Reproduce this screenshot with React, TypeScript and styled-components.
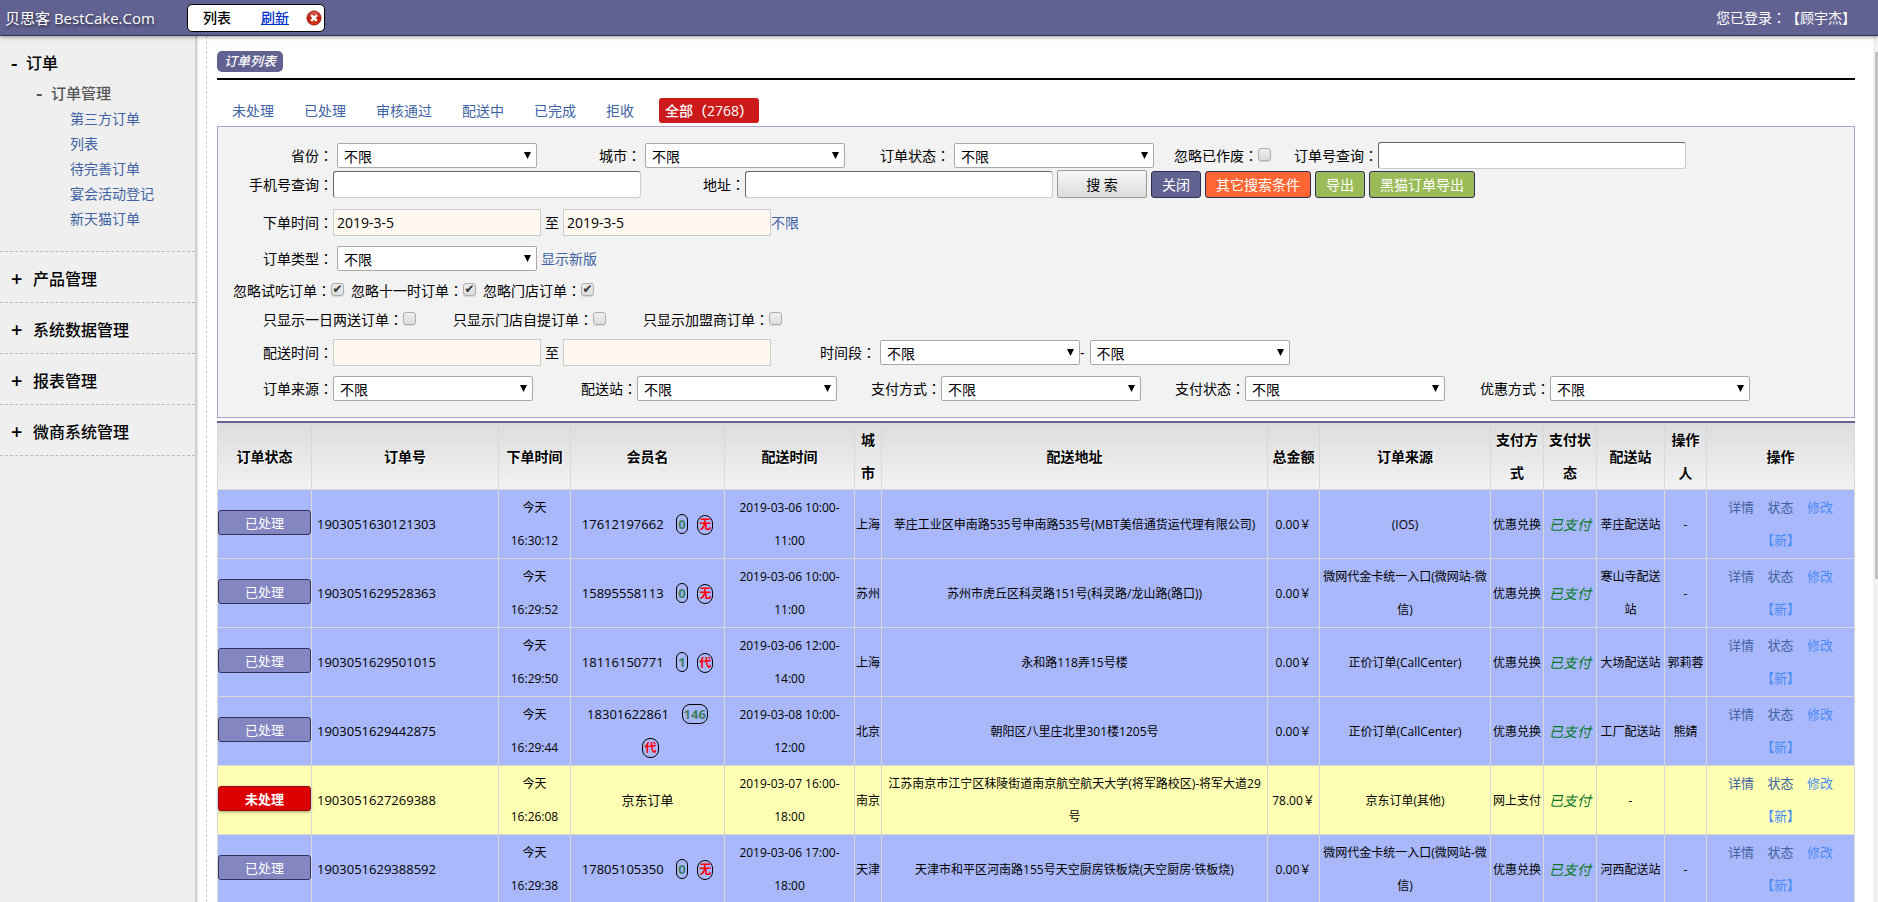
import React from 'react';
import styled, { createGlobalStyle, css } from 'styled-components';

const Global = createGlobalStyle`
  * { box-sizing: border-box; }
  body {
    margin: 0;
    background: #fff;
    color: #000;
    font-family: "Open Sans", "Noto Sans CJK SC", sans-serif;
    font-size: 14px;
    line-height: 20px;
    text-spacing-trim: space-all;
  }
  button, input, select { font-family: inherit; font-size: 14px; color: inherit; }
  a { color: #4163a3; text-decoration: none; }
`;

const Shell = styled.div`
  display: flex;
  flex-direction: column;
  height: 100vh;
  overflow: hidden;
`;

/* Full-width colon centred in its square, as in the traditional form. */
const ColonMark = styled.span`
  font-family: "Noto Sans CJK TC", sans-serif;
`;

/* ---------- top bar ---------- */

const TopBar = styled.header`
  position: relative;
  z-index: 1;
  display: flex;
  flex: none;
  align-items: center;
  height: 36px;
  padding: 0 22px 0 5px;
  background: #626292;
  border-bottom: 1px solid #33334a;
  box-shadow: 0 1px 4px rgba(0, 0, 0, 0.4);
  color: #fff;
`;

const Brand = styled.h1`
  width: 182px;
  margin: 0;
  font-size: 15px;
  font-weight: 400;
  text-shadow: 1px 2px 3px rgba(0, 0, 0, 0.6);
  white-space: nowrap;
`;

const OpenTab = styled.div`
  display: flex;
  align-items: center;
  height: 28px;
  padding: 0 2px 0 15px;
  background: #fff;
  border: 1px solid #000;
  border-radius: 5px;
  color: #000;
  font-weight: 500;
`;

const RefreshLink = styled.a`
  margin: 0 17px 0 30px;
  color: #0033cc;
  text-decoration: underline;
`;

const CloseButton = styled.button`
  display: flex;
  padding: 0;
  background: none;
  border: 0;
  cursor: pointer;
`;

const Login = styled.div`
  margin-left: auto;
`;

/* ---------- side menu ---------- */

const Body = styled.div`
  display: flex;
  flex: 1;
  min-height: 0;
`;

const SideBar = styled.nav`
  flex: none;
  width: 197px;
  background: #efefef;
  border-right: 2px solid #cfcfcf;
  box-shadow: 1px 0 2px rgba(0, 0, 0, 0.12);
`;

const OpenGroup = styled.section`
  height: 216px;
  padding-top: 15px;
  border-bottom: 1px dashed #bbb;
`;

const GroupTitle = styled.h2`
  display: flex;
  margin: 0;
  padding-left: 11px;
  font-size: 16px;
  font-weight: 500;
  line-height: 24px;
`;

const SubTitle = styled.h3`
  display: flex;
  margin: 6px 0 0;
  padding-left: 36px;
  color: #555;
  font-size: 15px;
  font-weight: 500;
  line-height: 24px;
`;

const Sign = styled.span<{ $wide?: boolean }>`
  width: ${(p) => (p.$wide ? 22 : 15)}px;
  font-size: 20px;
  font-weight: 600;
`;

const MenuList = styled.ul`
  margin: 1px 0 0;
  padding: 0 0 0 70px;
  list-style: none;
  line-height: 25px;
`;

const ClosedGroup = styled.section`
  display: flex;
  align-items: center;
  height: 51px;
  padding-top: 4px;
  border-bottom: 1px dashed #bbb;
`;

/* ---------- main column ---------- */

const Main = styled.main`
  flex: 1;
  min-width: 0;
  margin-left: 9px;
  padding: 15px 18px 0 10px;
  border-left: 1px dashed #ccc;
`;

const PageHead = styled.div`
  height: 29px;
  border-bottom: 2px solid #000;
`;

const PageTitle = styled.h2`
  display: inline-block;
  margin: 0;
  padding: 0 7px;
  background: #626292;
  border-radius: 5px;
  color: #fff;
  font-size: 13px;
  font-style: italic;
  font-weight: 500;
  line-height: 21px;
`;

const StatusTabs = styled.nav`
  display: flex;
  align-items: center;
  gap: 30px;
  height: 46px;
  padding: 15px 0 0 15px;
`;

const ActiveTab = styled.a`
  margin-left: -5px;
  padding: 0 6px;
  background: #cc1a1a;
  border-radius: 3px;
  color: #fff;
  font-weight: 500;
  line-height: 25px;
`;

const SearchPanel = styled.form`
  padding: 15px 0 16px;
  background: #f2f2f2;
  border: 1px solid #a5a5cc;
`;

const Row = styled.div<{ $h?: number; $top?: number; $indent?: number }>`
  display: flex;
  align-items: center;
  height: ${(p) => p.$h ?? 27}px;
  margin-top: ${(p) => p.$top ?? 10}px;
  padding-left: ${(p) => p.$indent ?? 45}px;
  white-space: nowrap;
`;

const Field = styled.label<{ $before?: number; $gap?: number }>`
  display: flex;
  align-items: center;
  gap: ${(p) => p.$gap ?? 0}px;
  margin-left: ${(p) => p.$before ?? 0}px;
`;

const TextBox = styled.input`
  width: 308px;
  height: 27px;
  padding: 0 4px;
  background: #fff;
  border: 1px solid;
  border-color: #666 #ccc #ccc #666;
  border-radius: 3px;
`;

const DateBox = styled.input`
  width: 208px;
  height: 27px;
  padding: 0 3px;
  background: #fff8f0;
  border: 1px solid #ccc;
`;

const Between = styled.span`
  padding: 0 4px;
`;

const SelectWrap = styled.span`
  position: relative;
  display: flex;
`;

const SelectBox = styled.select`
  appearance: none;
  width: 200px;
  height: 25px;
  padding: 1px 20px 0 6px;
  background: #fff;
  border: 1px solid #a9a9a9;
  border-radius: 2px;
`;

const Arrow = styled.svg`
  position: absolute;
  top: 9px;
  right: 6px;
  pointer-events: none;
`;

const Tick = styled.input`
  appearance: none;
  display: flex;
  align-items: center;
  justify-content: center;
  width: 13px;
  height: 13px;
  margin: 0 0 3px;
  background: linear-gradient(#eee, #dcdcdc);
  border: 1px solid #adadad;
  border-radius: 3px;
  box-shadow: 0 1px 1px rgba(0, 0, 0, 0.12);
  &:checked::after {
    content: '✔';
    color: #333;
    font: 12px/12px "DejaVu Sans", sans-serif;
  }
`;

const SearchButton = styled.button`
  width: 90px;
  height: 28px;
  margin-left: 4px;
  background: linear-gradient(#f6f6f6, #dcdcdc);
  border: 1px solid #999;
  border-radius: 2px;
`;

const ActionButton = styled.button<{ $bg: string }>`
  height: 27px;
  margin-left: 4px;
  padding: 0 10px;
  background: ${(p) => p.$bg};
  border: 1px solid #2e2e55;
  border-radius: 3px;
  color: #fff;
`;

/* ---------- orders table ---------- */

const Orders = styled.table`
  width: 100%;
  margin-top: 3px;
  border-collapse: collapse;
  border-top: 2px solid #626292;
  table-layout: fixed;
  font-size: 12px;
  line-height: 33px;
  text-align: center;
`;

const HeadRow = styled.tr`
  background: linear-gradient(#dcdcdc, #f2f2f2);
`;

const HeadCell = styled.th`
  height: 67px;
  padding: 0 3px;
  border: 1px solid #d8d8d8;
  border-top: 0;
  font-size: 14px;
  text-shadow: 1px 1px 2px #fff;
`;

const OrderRow = styled.tr<{ $pending?: boolean }>`
  background: ${(p) => (p.$pending ? '#ffffb3' : '#a9b8fb')};
`;

type CellKind = 'number' | 'when' | 'member' | 'address' | 'paid' | 'ops' | 'status';

const Cell = styled.td<{ $kind?: CellKind }>`
  height: 69px;
  padding: 1px 0;
  border: 1px solid #d8d8d8;
  ${(p) => p.$kind === 'number' && css`padding-left: 5px; font-size: 13px; text-align: left;`}
  ${(p) => p.$kind === 'when' && css`padding: 1px 6px;`}
  ${(p) => p.$kind === 'member' && css`padding: 1px 6px; font-size: 13px;`}
  ${(p) => p.$kind === 'address' && css`padding: 1px 4px;`}
  ${(p) => p.$kind === 'paid' && css`color: #0a7a2a; font-size: 14px; font-style: italic;`}
  ${(p) => p.$kind === 'ops' && css`padding: 1px 15px; font-size: 13px;`}
`;

const StateButton = styled.button<{ $pending?: boolean }>`
  display: block;
  width: 100%;
  height: 25px;
  margin-bottom: 3px;
  padding: 0;
  background: ${(p) => (p.$pending ? '#dd0000' : '#8486c1')};
  border: 1px solid ${(p) => (p.$pending ? '#8e1010' : '#333360')};
  border-radius: 3px;
  box-shadow: ${(p) => (p.$pending ? '0 1px 3px rgba(0, 0, 0, 0.4)' : 'none')};
  color: #fff;
  font-size: 13px;
  font-weight: ${(p) => (p.$pending ? 700 : 400)};
`;

const Pill = styled.b<{ $red?: boolean }>`
  display: inline-block;
  margin-left: 6px;
  padding: 0 1px;
  border: 1px solid #000;
  border-radius: 8px;
  color: ${(p) => (p.$red ? '#ff0000' : '#3f7f60')};
  font-size: ${(p) => (p.$red ? 12 : 13)}px;
  line-height: 18px;
`;

const OpLink = styled.a<{ $bright?: boolean }>`
  margin: 0 5px;
  color: ${(p) => (p.$bright ? '#4a8cf7' : '#4163a3')};
`;

/* ---------- page scroll bar ---------- */

const ScrollTrack = styled.div`
  flex: none;
  width: 5px;
  padding: 16px 0 0 2px;
  background: #f1f1f1;
`;

const ScrollThumb = styled.div`
  height: 62%;
  background: #c1c1c1;
`;

/* ---------- data ---------- */

const menuLinks = ['第三方订单', '列表', '待完善订单', '宴会活动登记', '新天猫订单'];
const closedGroups = ['产品管理', '系统数据管理', '报表管理', '微商系统管理'];
const statusTabs = ['未处理', '已处理', '审核通过', '配送中', '已完成', '拒收'];

const columns: [string, number | undefined][] = [
  ['订单状态', 94],
  ['订单号', 187],
  ['下单时间', 72],
  ['会员名', 154],
  ['配送时间', 130],
  ['城市', 27],
  ['配送地址', undefined],
  ['总金额', 52],
  ['订单来源', 171],
  ['支付方式', 53],
  ['支付状态', 53],
  ['配送站', 68],
  ['操作人', 42],
  ['操作', 148],
];

interface Order {
  no: string;
  time: string;
  member: string;
  count?: string;
  tag?: string;
  date: string;
  until: string;
  city: string;
  address: string;
  amount: string;
  source: string;
  pay: string;
  station: string;
  operator: string;
  pending?: boolean;
}

const orders: Order[] = [
  { no: '1903051630121303', time: '16:30:12', member: '17612197662', count: '0', tag: '无', date: '2019-03-06 10:00-', until: '11:00', city: '上海', address: '莘庄工业区申南路535号申南路535号(MBT美倍通货运代理有限公司)', amount: '0.00', source: '(IOS)', pay: '优惠兑换', station: '莘庄配送站', operator: '-' },
  { no: '1903051629528363', time: '16:29:52', member: '15895558113', count: '0', tag: '无', date: '2019-03-06 10:00-', until: '11:00', city: '苏州', address: '苏州市虎丘区科灵路151号(科灵路/龙山路(路口))', amount: '0.00', source: '微网代金卡统一入口(微网站-微信)', pay: '优惠兑换', station: '寒山寺配送站', operator: '-' },
  { no: '1903051629501015', time: '16:29:50', member: '18116150771', count: '1', tag: '代', date: '2019-03-06 12:00-', until: '14:00', city: '上海', address: '永和路118弄15号楼', amount: '0.00', source: '正价订单(CallCenter)', pay: '优惠兑换', station: '大场配送站', operator: '郭莉蓉' },
  { no: '1903051629442875', time: '16:29:44', member: '18301622861', count: '146', tag: '代', date: '2019-03-08 10:00-', until: '12:00', city: '北京', address: '朝阳区八里庄北里301楼1205号', amount: '0.00', source: '正价订单(CallCenter)', pay: '优惠兑换', station: '工厂配送站', operator: '熊婧' },
  { no: '1903051627269388', time: '16:26:08', member: '京东订单', date: '2019-03-07 16:00-', until: '18:00', city: '南京', address: '江苏南京市江宁区秣陵街道南京航空航天大学(将军路校区)-将军大道29号', amount: '78.00', source: '京东订单(其他)', pay: '网上支付', station: '-', operator: '', pending: true },
  { no: '1903051629388592', time: '16:29:38', member: '17805105350', count: '0', tag: '无', date: '2019-03-06 17:00-', until: '18:00', city: '天津', address: '天津市和平区河南路155号天空厨房铁板烧(天空厨房·铁板烧)', amount: '0.00', source: '微网代金卡统一入口(微网站-微信)', pay: '优惠兑换', station: '河西配送站', operator: '-' },
];

/* ---------- parts ---------- */

function Colon() {
  return <ColonMark lang="zh-TW">：</ColonMark>;
}

function Labelled({ text, before, gap, children }: { text: string; before?: number; gap?: number; children: React.ReactNode }) {
  return (
    <Field $before={before} $gap={gap}>
      <span>{text}<Colon /></span>
      {children}
    </Field>
  );
}

function Dropdown({ label }: { label?: string }) {
  return (
    <SelectWrap>
      <SelectBox aria-label={label}>
        <option>不限</option>
      </SelectBox>
      <Arrow width="7" height="7" viewBox="0 0 7 7" aria-hidden="true">
        <path d="M0 0h7L3.5 7z" fill="#000" />
      </Arrow>
    </SelectWrap>
  );
}

function TickField({ label, before, checked }: { label: string; before?: number; checked?: boolean }) {
  return (
    <Labelled text={label} before={before}>
      <Tick type="checkbox" defaultChecked={checked} />
    </Labelled>
  );
}

function CloseIcon() {
  return (
    <svg width="16" height="16" viewBox="0 0 16 16" aria-hidden="true">
      <defs>
        <linearGradient id="closeFill" x1="0" y1="0" x2="0" y2="1">
          <stop offset="0" stopColor="#d9685a" />
          <stop offset="0.5" stopColor="#bf1d0c" />
          <stop offset="1" stopColor="#e03a1c" />
        </linearGradient>
      </defs>
      <circle cx="8" cy="8" r="7" fill="url(#closeFill)" stroke="#a01408" />
      <path d="M5.2 5.2l5.6 5.6M10.8 5.2l-5.6 5.6" stroke="#fff" strokeWidth="2.4" />
    </svg>
  );
}

function SearchForm() {
  return (
    <SearchPanel onSubmit={(e) => e.preventDefault()}>
      <Row $top={0} $indent={73}>
        <Labelled text="省份" gap={4}><Dropdown /></Labelled>
        <Labelled text="城市" gap={4} before={62}><Dropdown /></Labelled>
        <Labelled text="订单状态" gap={4} before={35}><Dropdown /></Labelled>
        <TickField label="忽略已作废" before={20} />
        <Labelled text="订单号查询" before={23}><TextBox type="text" /></Labelled>
      </Row>
      <Row $top={0} $h={30} $indent={31}>
        <Labelled text="手机号查询"><TextBox type="text" /></Labelled>
        <Labelled text="地址" before={62}><TextBox type="text" /></Labelled>
        <SearchButton type="submit">搜 索</SearchButton>
        <ActionButton type="button" $bg="#626292">关闭</ActionButton>
        <ActionButton type="button" $bg="#ff6633">其它搜索条件</ActionButton>
        <ActionButton type="button" $bg="#9bbb59">导出</ActionButton>
        <ActionButton type="button" $bg="#9bbb59">黑猫订单导出</ActionButton>
      </Row>
      <Row>
        <Labelled text="下单时间"><DateBox type="text" defaultValue="2019-3-5" /></Labelled>
        <Between>至</Between>
        <DateBox type="text" aria-label="下单时间至" defaultValue="2019-3-5" />
        <a href="#any">不限</a>
      </Row>
      <Row $h={25}>
        <Labelled text="订单类型" gap={4}><Dropdown /></Labelled>
        <Between><a href="#new">显示新版</a></Between>
      </Row>
      <Row $h={19} $indent={15}>
        <TickField label="忽略试吃订单" checked />
        <TickField label="忽略十一时订单" before={7} checked />
        <TickField label="忽略门店订单" before={7} checked />
      </Row>
      <Row $h={19}>
        <TickField label="只显示一日两送订单" />
        <TickField label="只显示门店自提订单" before={37} />
        <TickField label="只显示加盟商订单" before={37} />
      </Row>
      <Row>
        <Labelled text="配送时间"><DateBox type="text" /></Labelled>
        <Between>至</Between>
        <DateBox type="text" aria-label="配送时间至" />
        <Labelled text="时间段" gap={4} before={49}><Dropdown /></Labelled>
        <Field $gap={5}>-<Dropdown label="时间段至" /></Field>
      </Row>
      <Row $h={25}>
        <Labelled text="订单来源"><Dropdown /></Labelled>
        <Labelled text="配送站" before={48}><Dropdown /></Labelled>
        <Labelled text="支付方式" before={34}><Dropdown /></Labelled>
        <Labelled text="支付状态" before={34}><Dropdown /></Labelled>
        <Labelled text="优惠方式" before={35}><Dropdown /></Labelled>
      </Row>
    </SearchPanel>
  );
}

function OrdersTable() {
  return (
    <Orders>
      <colgroup>
        {columns.map(([name, width]) => <col key={name} width={width} />)}
      </colgroup>
      <thead>
        <HeadRow>
          {columns.map(([name]) => <HeadCell key={name} scope="col">{name}</HeadCell>)}
        </HeadRow>
      </thead>
      <tbody>
        {orders.map((o) => (
          <OrderRow key={o.no} $pending={o.pending}>
            <Cell $kind="status">
              <StateButton type="button" $pending={o.pending}>{o.pending ? '未处理' : '已处理'}</StateButton>
            </Cell>
            <Cell $kind="number">{o.no}</Cell>
            <Cell $kind="when">今天 {o.time}</Cell>
            <Cell $kind="member">
              {o.member}
              {o.count && <>&nbsp; <Pill>{o.count}</Pill></>}
              {o.tag && <> <Pill $red>{o.tag}</Pill></>}
            </Cell>
            <Cell>{o.date}<br />{o.until}</Cell>
            <Cell>{o.city}</Cell>
            <Cell $kind="address">{o.address}</Cell>
            <Cell>{o.amount}￥</Cell>
            <Cell>{o.source}</Cell>
            <Cell>{o.pay}</Cell>
            <Cell $kind="paid">已支付</Cell>
            <Cell>{o.station}</Cell>
            <Cell>{o.operator}</Cell>
            <Cell $kind="ops">
              <OpLink href="#detail">详情</OpLink> <OpLink href="#state">状态</OpLink>{' '}
              <OpLink href="#edit" $bright>修改</OpLink> <OpLink href="#new" $bright>【新】</OpLink>
            </Cell>
          </OrderRow>
        ))}
      </tbody>
    </Orders>
  );
}

export default function App() {
  return (
    <Shell lang="zh-CN">
      <Global />
      <TopBar>
        <Brand>贝思客 BestCake.Com</Brand>
        <OpenTab>
          列表
          <RefreshLink href="#refresh">刷新</RefreshLink>
          <CloseButton type="button" aria-label="关闭标签"><CloseIcon /></CloseButton>
        </OpenTab>
        <Login>您已登录<Colon />【顾宇杰】</Login>
      </TopBar>
      <Body>
        <SideBar>
          <OpenGroup>
            <GroupTitle><Sign>-</Sign>订单</GroupTitle>
            <SubTitle><Sign>-</Sign>订单管理</SubTitle>
            <MenuList>
              {menuLinks.map((t) => <li key={t}><a href="#menu">{t}</a></li>)}
            </MenuList>
          </OpenGroup>
          {closedGroups.map((t) => (
            <ClosedGroup key={t}>
              <GroupTitle><Sign $wide>+</Sign>{t}</GroupTitle>
            </ClosedGroup>
          ))}
        </SideBar>
        <Main>
          <PageHead><PageTitle>订单列表</PageTitle></PageHead>
          <StatusTabs>
            {statusTabs.map((t) => <a key={t} href="#tab">{t}</a>)}
            <ActiveTab href="#all">全部（2768）</ActiveTab>
          </StatusTabs>
          <SearchForm />
          <OrdersTable />
        </Main>
        <ScrollTrack aria-hidden="true"><ScrollThumb /></ScrollTrack>
      </Body>
    </Shell>
  );
}
